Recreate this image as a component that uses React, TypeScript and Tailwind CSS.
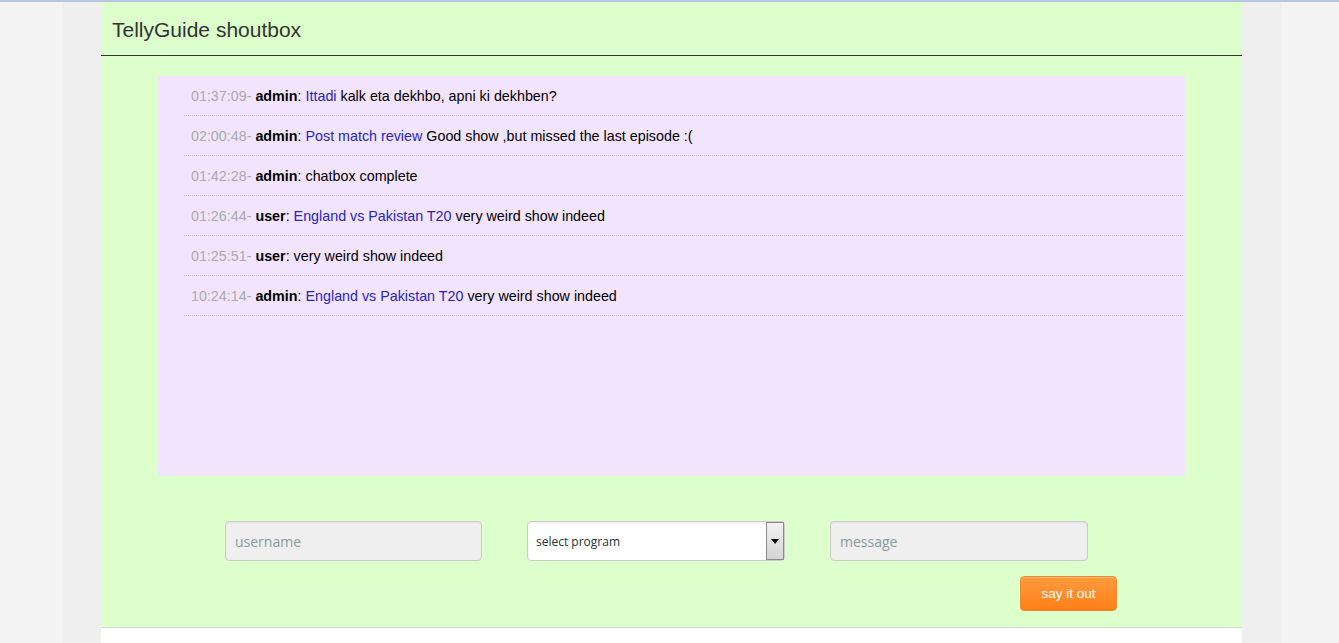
import React, { useState } from 'react';

const shouts = [
  { time: '01:37:09', user: 'admin', program: 'Ittadi', text: 'kalk eta dekhbo, apni ki dekhben?' },
  { time: '02:00:48', user: 'admin', program: 'Post match review', text: 'Good show ,but missed the last episode :(' },
  { time: '01:42:28', user: 'admin', program: '', text: 'chatbox complete' },
  { time: '01:26:44', user: 'user', program: 'England vs Pakistan T20', text: 'very weird show indeed' },
  { time: '01:25:51', user: 'user', program: '', text: 'very weird show indeed' },
  { time: '10:24:14', user: 'admin', program: 'England vs Pakistan T20', text: 'very weird show indeed' },
];

const App = () => {
  const [username, setUsername] = useState('');
  const [message, setMessage] = useState('');

  return (
    <div
      className="min-h-[643px] bg-[#f4f4f4] border-t-2 border-[#b4c8e4] pl-[62px] pr-[57px]"
      style={{ fontFamily: '"Liberation Sans", Arial, sans-serif' }}
    >
      <div className="bg-[#efefef] pl-[39px] pr-[40px] min-h-[641px]">
        <div className="bg-[#ddffcc]">
          {/* header */}
          <div className="h-[54px] flex items-center pl-[11px] border-b border-[#333333]">
            <h1 className="text-[21px] text-[#333333] pt-[3px]">TellyGuide shoutbox</h1>
          </div>

          {/* shouts */}
          <div className="ml-[57px] mt-[20px] w-[1027px] h-[400px] bg-[#f3e4fd] pl-[26px] pr-[2px]">
            {shouts.map((s, i) => (
              <div key={i} className="h-[40px] flex items-center pl-[7px] pt-[2px] text-[14.3px] border-b border-dotted border-[#cdbcd8]">
                <span className="text-[#aaaaaa]">{s.time}-</span>
                <span className="ml-[4px] font-bold text-black">{s.user}</span>
                <span className="text-black">:</span>
                {s.program && <a className="ml-[4px] text-[#2525c4]">{s.program}</a>}
                <span className="ml-[4px] text-black">{s.text}</span>
              </div>
            ))}
          </div>

          {/* form */}
          <div className="flex pl-[124px] gap-[45px] mt-[45px]" style={{ fontFamily: '"Open Sans", sans-serif' }}>
            <input
              type="text"
              placeholder="username"
              value={username}
              onChange={(e) => setUsername(e.target.value)}
              className="w-[257px] h-[40px] px-[9px] text-[14px] bg-[#efefef] border border-[#cccccc] rounded-[4px] shadow-[inset_0_1px_2px_rgba(0,0,0,0.06)] outline-none placeholder:text-[#879c9c]"
            />
            <div className="w-[258px] h-[40px] flex items-center bg-white border border-[#cccccc] rounded-[4px] shadow-[inset_0_1px_3px_rgba(0,0,0,0.08)] pl-[8px]">
              <span className="flex-1 text-[12px] text-[#1e3434] pt-[1px]">select program</span>
              <span className="w-[18px] h-[38px] flex items-center justify-center border border-[#8a8a8a] bg-gradient-to-b from-[#f2f2f2] to-[#d4d4d4]">
                <span className="w-0 h-0 border-l-[4px] border-r-[4px] border-t-[5px] border-l-transparent border-r-transparent border-t-black" />
              </span>
            </div>
            <input
              type="text"
              placeholder="message"
              value={message}
              onChange={(e) => setMessage(e.target.value)}
              className="w-[258px] h-[40px] px-[9px] text-[14px] bg-[#efefef] border border-[#cccccc] rounded-[4px] shadow-[inset_0_1px_2px_rgba(0,0,0,0.06)] outline-none placeholder:text-[#879c9c]"
            />
          </div>

          <div className="flex justify-end pr-[125px] pt-[15px] pb-[16px]">
            <button className="w-[97px] h-[35px] pt-[2px] rounded-[4px] border border-[#e88a2e] bg-gradient-to-b from-[#ff9a3c] to-[#ff7f14] text-white text-[13.5px] shadow-[inset_0_1px_0_rgba(255,255,255,0.3)]">
              say it out
            </button>
          </div>
        </div>
        <div className="border-t border-[#d3dccd] bg-white h-[20px]" />
      </div>
    </div>
  );
};

export default App;
